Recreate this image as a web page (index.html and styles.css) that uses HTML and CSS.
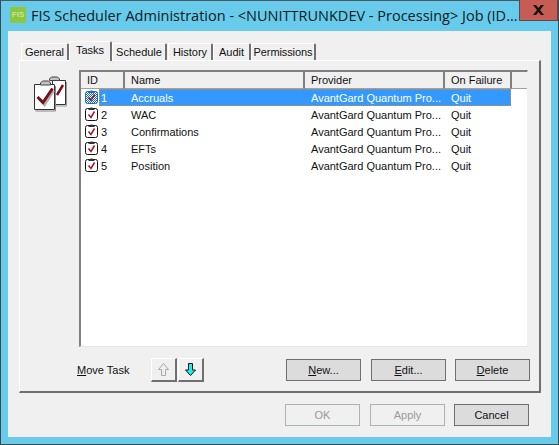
FILE: index.html
```html
<!DOCTYPE html>
<html lang="en">
<head>
    <meta charset="UTF-8">
    <title>FIS Scheduler Administration</title>
    <link rel="stylesheet" href="styles.css">
</head>
<body>
    <svg class="defs" width="0" height="0">
        <defs>
            <pattern id="dither" width="2" height="2" patternUnits="userSpaceOnUse">
                <rect width="2" height="2" fill="#fff"/>
                <rect width="1" height="1" fill="#1a6fd0"/>
                <rect x="1" y="1" width="1" height="1" fill="#1a6fd0"/>
            </pattern>
        </defs>
    </svg>

    <div class="window">
        <div class="titlebar">
            <div class="app-icon">FIS</div>
            <div class="title">FIS Scheduler Administration - &lt;NUNITTRUNKDEV - Processing&gt; Job (ID...</div>
            <div class="close">
                <svg width="13" height="10" viewBox="0 0 13 10"><path d="M1 0h3l2.500 3 2.500-3h3l-4 5 4 5h-3l-2.500-3-2.500 3h-3l4-5z" fill="#111"/></svg>
            </div>
        </div>

        <div class="client">
            <div class="tabs">
                <div class="tab first">General</div>
                <div class="tab active">Tasks</div>
                <div class="tab sched">Schedule</div>
                <div class="tab hist">History</div>
                <div class="tab audit">Audit</div>
                <div class="tab perm">Permissions</div>
            </div>

            <div class="panel">
                <div class="panel-top">
                    <svg class="big-icon" width="34" height="36" viewBox="0 0 34 36">
                        <!-- back clipboard -->
                        <path d="M18.500 4.500h13v24h-13z" fill="#fff" stroke="#333"/>
                        <path d="M32.500 6v24h-14" fill="none" stroke="#999"/>
                        <path d="M15.500 4.500V3l2-2h6l2 2v1.500z" fill="#c4c4c4" stroke="#444"/>
                        <path d="M23 19l6-10" fill="none" stroke="#7a0f1a" stroke-width="2.500"/>
                        <!-- front clipboard -->
                        <path d="M.5 8.500h20v25H.5z" fill="#fff" stroke="#333"/>
                        <path d="M21.500 10v25h-20" fill="none" stroke="#888"/>
                        <path d="M6.500 9V7l2-2h6l2 2v2z" fill="#c4c4c4" stroke="#444"/>
                        <path d="M4.500 22l5 5.500 9-14" fill="none" stroke="#b0b0b0" stroke-width="3" transform="translate(1 1)"/>
                        <path d="M3.500 21l5.500 5.500 9.500-14" fill="none" stroke="#7a0f1a" stroke-width="3"/>
                    </svg>

                    <div class="list">
                        <div class="row head">
                            <div class="hcell">ID</div>
                            <div class="hcell">Name</div>
                            <div class="hcell">Provider</div>
                            <div class="hcell">On Failure</div>
                            <div class="hcell filler"></div>
                        </div>

                        <div class="row item selected">
                            <svg class="task-icon" width="13" height="16" viewBox="0 0 13 16">
                                <rect x=".5" y="2.500" width="12" height="12" rx="2" fill="url(#dither)" stroke="#1a6fd0"/>
                                <path d="M3.500 4V2.500h1.500l.5-1h2l.5 1h1.500V4z" fill="#1a6fd0"/>
                                <path d="M3.500 8.500l2.500 3 3.500-6" fill="none" stroke="#8a2030" stroke-width="1.500"/>
                            </svg>
                            <div class="sel-box">
                                <div class="c-id">1</div>
                                <div class="c-name">Accruals</div>
                                <div class="c-prov">AvantGard Quantum Pro...</div>
                                <div class="c-fail">Quit</div>
                            </div>
                        </div>
                        <div class="row item">
                            <svg class="task-icon" width="13" height="16" viewBox="0 0 13 16">
                                <rect x=".5" y="2.500" width="12" height="12" rx="2" fill="#fff" stroke="#111"/>
                                <path d="M3.500 4V2.500h1.500l.5-1h2l.5 1h1.500V4z" fill="#333"/>
                                <path d="M3.500 8.500l2.500 3 3.500-6" fill="none" stroke="#a01525" stroke-width="1.500"/>
                            </svg>
                            <div class="sel-box">
                                <div class="c-id">2</div>
                                <div class="c-name">WAC</div>
                                <div class="c-prov">AvantGard Quantum Pro...</div>
                                <div class="c-fail">Quit</div>
                            </div>
                        </div>
                        <div class="row item">
                            <svg class="task-icon" width="13" height="16" viewBox="0 0 13 16">
                                <rect x=".5" y="2.500" width="12" height="12" rx="2" fill="#fff" stroke="#111"/>
                                <path d="M3.500 4V2.500h1.500l.5-1h2l.5 1h1.500V4z" fill="#333"/>
                                <path d="M3.500 8.500l2.500 3 3.500-6" fill="none" stroke="#a01525" stroke-width="1.500"/>
                            </svg>
                            <div class="sel-box">
                                <div class="c-id">3</div>
                                <div class="c-name">Confirmations</div>
                                <div class="c-prov">AvantGard Quantum Pro...</div>
                                <div class="c-fail">Quit</div>
                            </div>
                        </div>
                        <div class="row item">
                            <svg class="task-icon" width="13" height="16" viewBox="0 0 13 16">
                                <rect x=".5" y="2.500" width="12" height="12" rx="2" fill="#fff" stroke="#111"/>
                                <path d="M3.500 4V2.500h1.500l.5-1h2l.5 1h1.500V4z" fill="#333"/>
                                <path d="M3.500 8.500l2.500 3 3.500-6" fill="none" stroke="#a01525" stroke-width="1.500"/>
                            </svg>
                            <div class="sel-box">
                                <div class="c-id">4</div>
                                <div class="c-name">EFTs</div>
                                <div class="c-prov">AvantGard Quantum Pro...</div>
                                <div class="c-fail">Quit</div>
                            </div>
                        </div>
                        <div class="row item">
                            <svg class="task-icon" width="13" height="16" viewBox="0 0 13 16">
                                <rect x=".5" y="2.500" width="12" height="12" rx="2" fill="#fff" stroke="#111"/>
                                <path d="M3.500 4V2.500h1.500l.5-1h2l.5 1h1.500V4z" fill="#333"/>
                                <path d="M3.500 8.500l2.500 3 3.500-6" fill="none" stroke="#a01525" stroke-width="1.500"/>
                            </svg>
                            <div class="sel-box">
                                <div class="c-id">5</div>
                                <div class="c-name">Position</div>
                                <div class="c-prov">AvantGard Quantum Pro...</div>
                                <div class="c-fail">Quit</div>
                            </div>
                        </div>
                    </div>
                </div>

                <div class="panel-actions">
                    <div class="move-label"><u>M</u>ove Task</div>
                    <div class="arrow-btn">
                        <svg width="13" height="13" viewBox="0 0 13 13"><path d="M4.500 12.500v-6h-3l5-6 5 6h-3v6z" fill="#f0f0f0" stroke="#a8a8a8"/></svg>
                    </div>
                    <div class="arrow-btn down">
                        <svg width="13" height="13" viewBox="0 0 13 13"><path d="M4.500.5v6.500h-3l5 5.500 5-5.500h-3V.5z" fill="#19f0f0" stroke="#111"/></svg>
                    </div>
                    <div class="btn new"><span><u>N</u>ew...</span></div>
                    <div class="btn"><span><u>E</u>dit...</span></div>
                    <div class="btn last"><span><u>D</u>elete</span></div>
                </div>
            </div>

            <div class="footer">
                <div class="btn disabled">OK</div>
                <div class="btn disabled apply">Apply</div>
                <div class="btn last">Cancel</div>
            </div>
        </div>
    </div>
</body>
</html>
```

FILE: styles.css
```css
html, body {
    margin: 0;
    padding: 0;
}

body {
    font-family: "Liberation Sans", Arial, sans-serif;
    font-size: 11px;
    color: #111;
    background: #69cbec;
}

.defs {
    display: block;
    height: 0;
}

.window {
    width: 559px;
    height: 445px;
    box-sizing: border-box;
    border: 1px solid #3a4a50;
    border-top-color: #4a5a60;
    background: #69cbec;
    padding: 0 7px 7px;
    display: flex;
    flex-direction: column;
}

/* title bar */
.titlebar {
    height: 30px;
    flex: none;
    display: flex;
    align-items: flex-start;
    margin-right: -7px;
}

.app-icon {
    width: 16px;
    height: 16px;
    margin: 6px 0 0 2px;
    background: #8dc63f;
    color: #c6e49a;
    font-size: 8px;
    font-weight: bold;
    line-height: 16px;
    text-align: center;
    flex: none;
}

.title {
    font-family: "Open Sans", sans-serif;
    font-size: 14.5px;
    line-height: 20px;
    margin: 5px 0 0 5px;
    color: #0c1c22;
    white-space: nowrap;
    width: 488px;
    flex: none;
}

.close {
    width: 39px;
    height: 21px;
    margin-top: -1px;
    flex: none;
    box-sizing: border-box;
    background: #c65c53;
    border: 1px solid #5c4a48;
    border-top: 0;
    display: flex;
    align-items: center;
    justify-content: center;
}

/* dialog body */
.client {
    flex: 1;
    background: #f0f0f0;
    padding: 10px 10px 0 11px;
    display: flex;
    flex-direction: column;
}

.tabs {
    display: flex;
    align-items: flex-end;
    height: 19px;
    padding-left: 2px;
    position: relative;
    z-index: 1;
}

.tab {
    height: 17px;
    box-sizing: border-box;
    border: 1px solid #fff;
    border-right: 2px solid #707070;
    border-bottom: 0;
    border-radius: 2px 2px 0 0;
    background: #f0f0f0;
    line-height: 17px;
    text-align: center;
    flex: none;
}

.tab.first { width: 48px; }
.tab.sched { width: 55px; }
.tab.hist { width: 45px; margin-left: 1px; }
.tab.audit { width: 38px; }
.tab.perm { width: 65px; letter-spacing: -.1px; }

.tab.active {
    width: 43px;
    height: 20px;
    margin-bottom: -1px;
    line-height: 17px;
}

.panel {
    width: 522px;
    height: 333px;
    box-sizing: border-box;
    border: 1px solid #fff;
    border-right: 2px solid #707070;
    border-bottom: 2px solid #707070;
    padding: 9px 11px 0 14px;
    display: flex;
    flex-direction: column;
}

.panel-top {
    display: flex;
    align-items: flex-start;
    height: 277px;
    flex: none;
}

.big-icon {
    margin-top: 6px;
    width: 34px;
    flex: none;
    margin-right: 11px;
}

/* task list */
.list {
    width: 451px;
    height: 277px;
    box-sizing: border-box;
    background: #fff;
    border: 2px solid #808080;
    border-right-color: #f0f0f0;
    border-bottom-color: #e4e4e4;
    border-right-width: 1px;
    border-bottom-width: 1px;
    overflow: hidden;
}

.row {
    display: flex;
}

.head {
    height: 17px;
}

.hcell {
    box-sizing: border-box;
    height: 17px;
    line-height: 16px;
    padding-left: 6px;
    background: #f0f0f0;
    border-right: 2px solid #808080;
    border-bottom: 1px solid #a0a0a0;
    flex: none;
}

.hcell:nth-child(1) { width: 44px; }
.hcell:nth-child(2) { width: 180px; }
.hcell:nth-child(3) { width: 140px; }
.hcell:nth-child(4) { width: 67px; }

.hcell.filler {
    flex: 1;
    border-right: 0;
    background: #f0f0f0;
}

.item {
    height: 17px;
    align-items: flex-start;
}

.task-icon {
    margin-left: 4px;
    flex: none;
}

.sel-box {
    display: flex;
    width: 412px;
    height: 17px;
    box-sizing: border-box;
    line-height: 17px;
    margin-left: 1px;
    flex: none;
    border: 1px solid transparent;
}

.selected .sel-box {
    background: #3399ff;
    color: #fff;
    border: 1px dotted #e08a30;
}

.c-id { width: 31px; padding-left: 1px; box-sizing: border-box; }
.c-name { width: 180px; }
.c-prov { width: 140px; }
.c-fail { width: 50px; }

/* bottom of the tab page */
.panel-actions {
    display: flex;
    align-items: flex-start;
    margin-top: 11px;
}

.move-label {
    width: 74px;
    line-height: 24px;
    margin-left: 43px;
    flex: none;
}

.arrow-btn {
    width: 26px;
    height: 24px;
    box-sizing: border-box;
    border: 1px solid #fff;
    border-right: 2px solid #707070;
    border-bottom: 2px solid #707070;
    display: flex;
    align-items: center;
    justify-content: center;
    flex: none;
}

.arrow-btn.down {
    margin-left: 1px;
}

.btn {
    width: 75px;
    height: 22px;
    box-sizing: border-box;
    border: 1px solid #707070;
    background: #dcdcdc;
    line-height: 20px;
    text-align: center;
    flex: none;
}

.panel-actions .btn {
    margin-top: 1px;
    margin-left: 10px;
}

.panel-actions .btn.new {
    margin-left: 82px;
}

.panel-actions .btn.last,
.footer .btn.last {
    margin-left: 9px;
}

.btn.disabled {
    background: #f0f0f0;
    border-color: #adb2b5;
    color: #9a9a9a;
}

.btn.apply {
    margin-left: 10px;
}

.footer {
    display: flex;
    justify-content: flex-end;
    margin-top: 11px;
    padding-right: 12px;
}
```
